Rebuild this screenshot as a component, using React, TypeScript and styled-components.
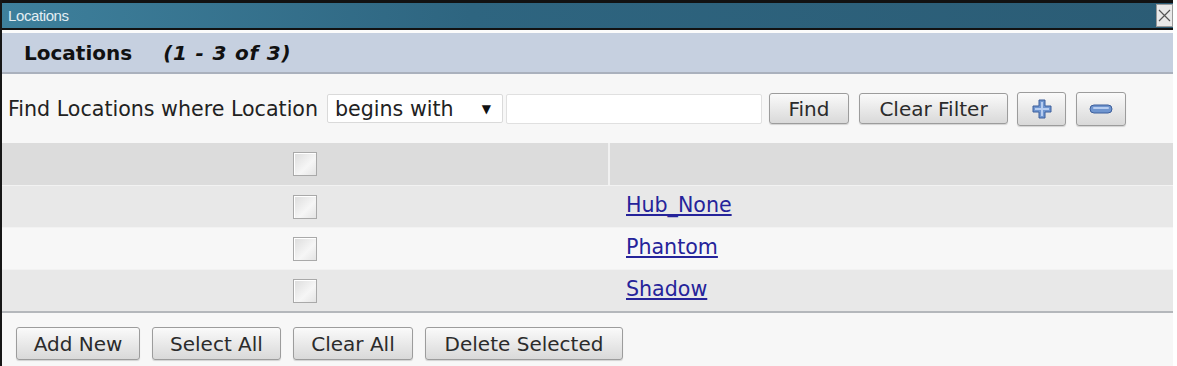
import React from 'react';
import styled, { createGlobalStyle } from 'styled-components';

const GlobalStyle = createGlobalStyle`
  html, body {
    margin: 0;
    padding: 0;
    background: #ffffff;
  }
  body {
    font-family: "DejaVu Sans", Verdana, sans-serif;
  }
`;

const Frame = styled.div`
  width: 1171px;
  height: 366px;
  border-left: 2px solid #161616;
  background: #f7f7f7;
  display: flex;
  flex-direction: column;
  overflow: hidden;
`;

const TitleBar = styled.div`
  height: 25px;
  border-top: 3px solid #121212;
  border-bottom: 2px solid #121212;
  background: linear-gradient(to right, #3e809c, #2e6580 40%, #2b5c75);
  display: flex;
  align-items: center;
  justify-content: space-between;
  padding-left: 6px;
`;

const TitleText = styled.span`
  font-family: "Liberation Sans", Arial, sans-serif;
  font-size: 15px;
  color: #e4eef3;
  letter-spacing: -0.4px;
`;

const CloseBox = styled.div`
  width: 15px;
  height: 21px;
  background: #e9e9e9;
  border: 1px solid #9a9a9a;
  display: flex;
  align-items: center;
  justify-content: center;
`;

const Gap = styled.div`
  height: 3px;
  background: #fbfbfb;
`;

const HeaderBand = styled.div`
  height: 39px;
  background: #c6d0e0;
  border-bottom: 2px solid #aab1bd;
  display: flex;
  align-items: center;
  padding-left: 22px;
  gap: 31px;
  font-size: 20px;
  font-weight: bold;
  color: #111;
`;

const Range = styled.span`
  font-style: italic;
  letter-spacing: 0.8px;
`;

const FilterRow = styled.div`
  height: 69px;
  display: flex;
  align-items: center;
  padding-left: 6px;
  font-size: 20.6px;
  color: #222;
`;

const FilterLabel = styled.span`
  margin-right: 9px;
  white-space: nowrap;
`;

const SelectBox = styled.div`
  width: 176px;
  height: 29px;
  box-sizing: border-box;
  background: #fff;
  border: 1px solid #dadada;
  border-radius: 2px;
  display: flex;
  align-items: center;
  justify-content: space-between;
  padding: 0 11px 0 7px;
  flex-shrink: 0;
`;

const Caret = styled.span`
  font-size: 12px;
  color: #111;
`;

const TextBox = styled.div`
  width: 256px;
  height: 30px;
  box-sizing: border-box;
  margin-left: 3px;
  background: #fff;
  border: 1px solid #e0e0e0;
  border-radius: 2px;
  flex-shrink: 0;
`;

const Button = styled.div<{ $w: number; $h?: number; $ml?: number }>`
  width: ${(p) => p.$w}px;
  height: ${(p) => p.$h ?? 31}px;
  margin-left: ${(p) => p.$ml ?? 0}px;
  box-sizing: border-box;
  border: 1px solid #9c9c9c;
  border-radius: 3px;
  background: linear-gradient(#fafafa, #e6e6e6 60%, #d9d9d9);
  box-shadow: 0 1px 1px rgba(0, 0, 0, 0.15);
  display: flex;
  align-items: center;
  justify-content: center;
  font-size: 20px;
  color: #2b2b2b;
  white-space: nowrap;
  flex-shrink: 0;
`;

const Table = styled.div`
  display: flex;
  flex-direction: column;
  border-bottom: 2px solid #b4b7bb;
`;

const Row = styled.div<{ $bg: string; $head?: boolean }>`
  height: 42px;
  display: grid;
  grid-template-columns: 606px 1fr;
  background: ${(p) => p.$bg};
  border-top: ${(p) => (p.$head ? '0' : '1px solid #f2f2f2')};
  box-sizing: border-box;
`;

const CheckCell = styled.div`
  display: flex;
  align-items: center;
  justify-content: center;
`;

const NameCell = styled.div<{ $divider?: boolean }>`
  display: flex;
  align-items: center;
  padding-left: 16px;
  padding-bottom: 3px;
  border-left: ${(p) => (p.$divider ? '2px solid #f1f1f1' : '2px solid transparent')};
`;

const Check = styled.div`
  width: 24px;
  height: 24px;
  box-sizing: border-box;
  border: 1px solid #a9a9a9;
  background: linear-gradient(135deg, #dcdcdc, #f6f6f6 60%, #e4e4e4);
  box-shadow: inset 1px 1px 0 #ffffff;
`;

const NameLink = styled.a`
  font-size: 20.6px;
  color: #25239a;
  text-decoration: underline;
  cursor: pointer;
`;

const Footer = styled.div`
  display: flex;
  align-items: center;
  gap: 12px;
  padding: 14px 0 0 14px;
`;

const PlusIcon = () => (
  <svg width="22" height="22" viewBox="0 0 22 22">
    <path
      d="M8 2 h6 v6 h6 v6 h-6 v6 h-6 v-6 h-6 v-6 h6 z"
      fill="#6f95cf"
      stroke="#3d5f9c"
      strokeWidth="1"
    />
    <path d="M10 4 h2 v6 h6 v2 h-6 v6 h-2 v-6 h-6 v-2 h6 z" fill="#b7cdf0" />
  </svg>
);

const MinusIcon = () => (
  <svg width="24" height="10" viewBox="0 0 24 10">
    <rect x="1" y="1" width="22" height="8" rx="4" fill="#6f95cf" stroke="#3d5f9c" />
    <rect x="4" y="3" width="16" height="2" rx="1" fill="#b7cdf0" />
  </svg>
);

const CloseIcon = () => (
  <svg width="13" height="13" viewBox="0 0 13 13">
    <path d="M1 1 L12 12 M12 1 L1 12" stroke="#555" strokeWidth="1.2" />
  </svg>
);

const locations = ['Hub_None', 'Phantom', 'Shadow'];

export default function App() {
  return (
    <>
      <GlobalStyle />
      <Frame>
        <TitleBar>
          <TitleText>Locations</TitleText>
          <CloseBox>
            <CloseIcon />
          </CloseBox>
        </TitleBar>
        <Gap />
        <HeaderBand>
          <span>Locations</span>
          <Range>(1 - 3 of 3)</Range>
        </HeaderBand>
        <FilterRow>
          <FilterLabel>Find Locations where Location</FilterLabel>
          <SelectBox>
            <span>begins with</span>
            <Caret>▼</Caret>
          </SelectBox>
          <TextBox />
          <Button $w={80} $ml={7}>Find</Button>
          <Button $w={149} $ml={10}>Clear Filter</Button>
          <Button $w={49} $h={34} $ml={9}>
            <PlusIcon />
          </Button>
          <Button $w={50} $h={34} $ml={10}>
            <MinusIcon />
          </Button>
        </FilterRow>
        <Table>
          <Row $bg="#dcdcdc" $head>
            <CheckCell>
              <Check />
            </CheckCell>
            <NameCell $divider />
          </Row>
          {locations.map((name, idx) => (
            <Row key={name} $bg={idx % 2 === 0 ? '#e8e8e8' : '#f7f7f7'}>
              <CheckCell>
                <Check />
              </CheckCell>
              <NameCell>
                <NameLink>{name}</NameLink>
              </NameCell>
            </Row>
          ))}
        </Table>
        <Footer>
          <Button $w={124} $h={33}>Add New</Button>
          <Button $w={129} $h={33}>Select All</Button>
          <Button $w={120} $h={33}>Clear All</Button>
          <Button $w={198} $h={33}>Delete Selected</Button>
        </Footer>
      </Frame>
    </>
  );
}
